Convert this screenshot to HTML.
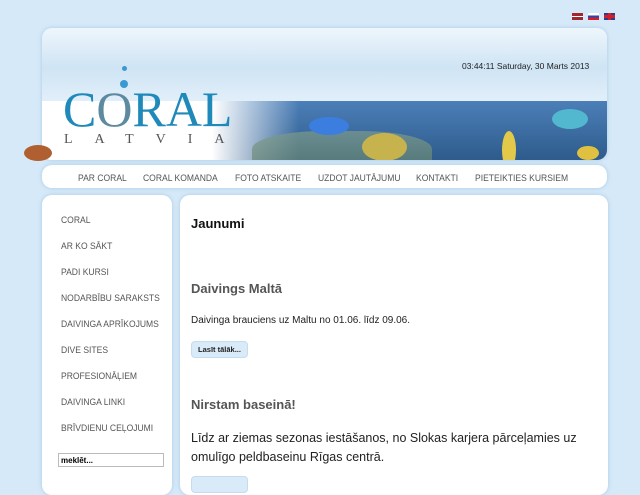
<!DOCTYPE html>
<html><head><meta charset="utf-8"><style>
body{margin:0;width:640px;height:480px;overflow:hidden;background:#d6e9f8;font-family:"Liberation Sans",sans-serif;position:relative}
.a{position:absolute}
.flag{position:absolute;top:13px;width:11px;height:7px}
#hdr{left:42px;top:28px;width:565px;height:132px;border-radius:10px;overflow:hidden;background:linear-gradient(#eef6fc,#cfe4f4 30%,#e3f0fa 58%);box-shadow:0 0 4px #a9cbe6}
#photo{left:170px;top:73px;width:395px;height:86px;background:linear-gradient(90deg,rgba(255,255,255,1) 0%,rgba(255,255,255,0) 22%),linear-gradient(#4c7fb8,#3a6a9e 40%,#2d5a8a 70%,#1d3f7a);}
#white{left:0;top:73px;width:200px;height:86px;background:#fff}
#nav{left:42px;top:165px;width:565px;height:23px;border-radius:10px;background:#fff;box-shadow:0 0 5px #a9cbe6;font-size:9.5px;color:#555}
#nav span{position:absolute;top:8px;transform:scaleX(.9);transform-origin:left;white-space:nowrap}
#side{left:42px;top:195px;width:130px;height:300px;border-radius:10px;background:#fff;box-shadow:0 0 5px #a9cbe6}
#side div{position:absolute;left:19px;font-size:9.5px;color:#555;transform:scaleX(.9);transform-origin:left;white-space:nowrap}
#main{left:180px;top:195px;width:428px;height:300px;border-radius:10px;background:#fff;box-shadow:0 0 5px #a9cbe6}
.btn{position:absolute;left:11px;width:55px;height:15px;background:#d9ebf8;border:1px solid #c5dcee;border-radius:4px;font-size:7.5px;font-weight:bold;line-height:15px;text-align:center;color:#222}
</style></head><body>
<div class="flag" style="left:572px;background:linear-gradient(#a0262f 40%,#fff 40%,#fff 60%,#a0262f 60%)"></div>
<div class="flag" style="left:588px;background:linear-gradient(#fff 33%,#2846b4 33%,#2846b4 66%,#d21f2a 66%)"></div>
<div class="flag" style="left:604px;background:#2a3f8e"><div class="a" style="left:4px;top:0;width:3px;height:7px;background:#d21f2a"></div><div class="a" style="left:0;top:2px;width:11px;height:3px;background:#d21f2a"></div></div>
<div id="hdr" class="a">
 <div id="white" class="a"></div>
 <div id="photo" class="a">
  <div class="a" style="left:40px;top:30px;width:180px;height:45px;background:linear-gradient(#7e9b8a,#5f7f6e);opacity:.7;border-radius:40% 40% 0 0"></div>
  <div class="a" style="left:97px;top:16px;width:40px;height:18px;background:#3c7de0;border-radius:50%"></div>
  <div class="a" style="left:150px;top:32px;width:45px;height:28px;background:#c7b34e;border-radius:50%"></div>
  <div class="a" style="left:340px;top:8px;width:36px;height:20px;background:#52b8d0;border-radius:50%"></div>
  <div class="a" style="left:290px;top:30px;width:14px;height:38px;background:#e2c94a;border-radius:50%"></div>
  <div class="a" style="left:365px;top:45px;width:22px;height:14px;background:#e0c040;border-radius:50%"></div>
 </div>
 <div class="a" style="left:420px;top:33px;font-size:8.5px;color:#222">03:44:11 Saturday, 30 Marts 2013</div>
 <div class="a" style="left:21px;top:52px;font-family:'Liberation Serif',serif;font-size:50px;color:#1f8ab9">C<span style="color:#5e8aa0">O</span>RAL</div>
 <div class="a" style="left:22px;top:104px;font-family:'Liberation Serif',serif;font-size:14px;color:#555;letter-spacing:22px">LATVIA</div>
 <div class="a" style="left:78px;top:52px;width:8px;height:8px;border-radius:50%;background:#3a99d0"></div>
 <div class="a" style="left:80px;top:38px;width:5px;height:5px;border-radius:50%;background:#3a99d0"></div>
</div>
<div class="a" style="left:24px;top:145px;width:28px;height:16px;background:#b06030;border-radius:50%"></div>
<div id="nav" class="a">
 <span style="left:36px">PAR CORAL</span><span style="left:101px">CORAL KOMANDA</span><span style="left:193px">FOTO ATSKAITE</span><span style="left:276px">UZDOT JAUTĀJUMU</span><span style="left:374px">KONTAKTI</span><span style="left:433px">PIETEIKTIES KURSIEM</span>
</div>
<div id="side" class="a">
 <div style="top:20px">CORAL</div><div style="top:46px">AR KO SĀKT</div><div style="top:72px">PADI KURSI</div><div style="top:98px">NODARBĪBU SARAKSTS</div><div style="top:124px">DAIVINGA APRĪKOJUMS</div><div style="top:150px">DIVE SITES</div><div style="top:176px">PROFESIONĀĻIEM</div><div style="top:202px">DAIVINGA LINKI</div><div style="top:228px">BRĪVDIENU CEĻOJUMI</div>
 <input class="a" style="left:16px;top:258px;width:100px;height:12px;border:1px solid #bbb;font-size:8px;font-weight:bold;padding:0 2px" value="meklēt...">
</div>
<div id="main" class="a">
 <div class="a" style="left:11px;top:21px;font-size:13px;font-weight:bold;color:#111">Jaunumi</div>
 <div class="a" style="left:11px;top:86px;font-size:13px;font-weight:bold;color:#555">Daivings Maltā</div>
 <div class="a" style="left:11px;top:120px;font-size:10px;color:#222">Daivinga brauciens uz Maltu no 01.06. līdz 09.06.</div>
 <div class="btn" style="top:146px">Lasīt tālāk...</div>
 <div class="a" style="left:11px;top:202px;font-size:13px;font-weight:bold;color:#555">Nirstam baseinā!</div>
 <div class="a" style="left:11px;top:234px;width:410px;font-size:12.5px;line-height:19px;color:#222">Līdz ar ziemas sezonas iestāšanos, no Slokas karjera pārceļamies uz omulīgo peldbaseinu Rīgas centrā.</div>
 <div class="btn" style="top:281px"></div>
</div>
</body></html>
